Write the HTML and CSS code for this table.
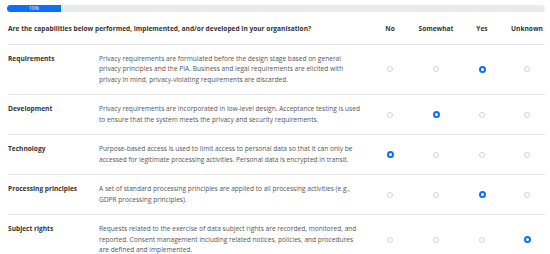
FILE: index.html
```html
<!DOCTYPE html>
<html lang="en">

<head>
    <meta charset="UTF-8">
    <meta name="viewport" content="width=device-width, initial-scale=1.0">
    <title>Privacy Capabilities - Assessment</title>
    <link rel="stylesheet" href="styles.css">
</head>

<body>
    <div class="survey">
        <!-- Progress -->
        <div class="progress">
            <div class="progress-bar" style="width: 10%">10%</div>
        </div>

        <!-- Question header -->
        <div class="row head">
            <div class="question">Are the capabilities below performed, implemented, and/or developed in your organisation?</div>
            <div class="choice">No</div>
            <div class="choice">Somewhat</div>
            <div class="choice">Yes</div>
            <div class="choice">Unknown</div>
        </div>

        <div class="row">
            <div class="label">Requirements</div>
            <div class="desc">Privacy requirements are formulated before the design stage based on general privacy principles and the PIA. Business and legal requirements are elicited with privacy in mind, privacy-violating requirements are discarded.</div>
            <div class="choice"><span class="radio"></span></div>
            <div class="choice"><span class="radio"></span></div>
            <div class="choice"><span class="radio checked"></span></div>
            <div class="choice"><span class="radio"></span></div>
        </div>

        <div class="row">
            <div class="label">Development</div>
            <div class="desc">Privacy requirements are incorporated in low-level design. Acceptance testing is used to ensure that the system meets the privacy and security requirements.</div>
            <div class="choice"><span class="radio"></span></div>
            <div class="choice"><span class="radio checked"></span></div>
            <div class="choice"><span class="radio"></span></div>
            <div class="choice"><span class="radio"></span></div>
        </div>

        <div class="row">
            <div class="label">Technology</div>
            <div class="desc">Purpose-based access is used to limit access to personal data so that it can only be accessed for legitimate processing activities. Personal data is encrypted in transit.</div>
            <div class="choice"><span class="radio checked"></span></div>
            <div class="choice"><span class="radio"></span></div>
            <div class="choice"><span class="radio"></span></div>
            <div class="choice"><span class="radio"></span></div>
        </div>

        <div class="row">
            <div class="label">Processing principles</div>
            <div class="desc">A set of standard processing principles are applied to all processing activities (e.g., GDPR processing principles).</div>
            <div class="choice"><span class="radio"></span></div>
            <div class="choice"><span class="radio"></span></div>
            <div class="choice"><span class="radio checked"></span></div>
            <div class="choice"><span class="radio"></span></div>
        </div>

        <div class="row">
            <div class="label">Subject rights</div>
            <div class="desc">Requests related to the exercise of data subject rights are recorded, monitored, and reported. Consent management including related notices, policies, and procedures are defined and implemented.</div>
            <div class="choice"><span class="radio"></span></div>
            <div class="choice"><span class="radio"></span></div>
            <div class="choice"><span class="radio"></span></div>
            <div class="choice"><span class="radio checked"></span></div>
        </div>
    </div>
</body>

</html>
```

FILE: styles.css
```css
* {
    margin: 0;
    padding: 0;
    box-sizing: border-box;
}

body {
    font-family: "Open Sans", "Noto Sans", sans-serif;
    background-color: #fff;
    color: #333;
    font-size: 6.6px;
    line-height: 10.5px;
}

/* Page */
.survey {
    padding: 5px 5px 0 8px;
}

/* Progress bar */
.progress {
    height: 7px;
    margin-left: -1px;
    background-color: #e9ecef;
    border-radius: 4px;
    overflow: hidden;
    display: flex;
}

.progress-bar {
    background-color: #0d6efd;
    color: #fff;
    font-size: 5px;
    line-height: 7px;
    text-align: center;
}

/* Rows */
.row {
    display: grid;
    grid-template-columns: 91px 1fr 46px 46px 46px 40px;
    align-items: center;
    padding: 9px 0;
    border-bottom: 1px solid #e6e6e6;
}

.row.head {
    padding-top: 12px;
    padding-bottom: 9px;
    font-weight: 700;
}

.question {
    grid-column: 1 / 3;
}

.label {
    align-self: start;
    font-weight: 700;
}

.desc {
    color: #555;
    padding-right: 5px;
}

.choice {
    display: flex;
    justify-content: center;
    align-items: center;
}

.choice:last-child {
    padding-left: 4px;
}

/* Radio buttons */
.radio {
    width: 6px;
    height: 6px;
    border: 1px solid #d4d4d4;
    border-radius: 50%;
    background-color: #fff;
}

.radio.checked {
    width: 7px;
    height: 7px;
    border: 2.2px solid #0d6efd;
}
```
